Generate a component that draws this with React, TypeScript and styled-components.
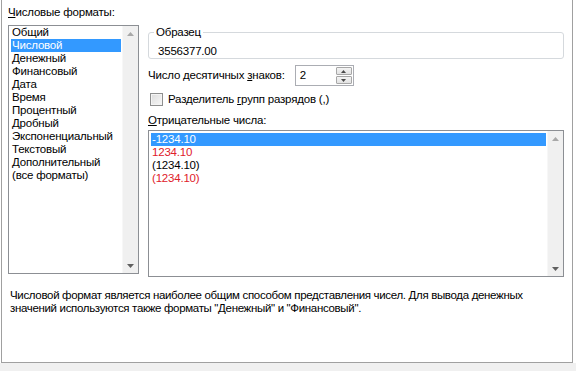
import React from 'react'
import styled, { createGlobalStyle } from 'styled-components'

const GlobalStyle = createGlobalStyle`
  html, body {
    margin: 0;
    padding: 0;
    background: #f0f0f0;
  }
  body {
    font-family: "Liberation Sans", Arial, sans-serif;
    font-size: 11.5px;
    letter-spacing: -0.2px;
    color: #000;
  }
`

const formats = [
  'Общий',
  'Числовой',
  'Денежный',
  'Финансовый',
  'Дата',
  'Время',
  'Процентный',
  'Дробный',
  'Экспоненциальный',
  'Текстовый',
  'Дополнительный',
  '(все форматы)',
]

const negatives = [
  { text: '-1234.10', red: false },
  { text: '1234.10', red: true },
  { text: '(1234.10)', red: false },
  { text: '(1234.10)', red: true },
]

const Page = styled.div`
  width: 576px;
  background: #fff;
`

const Panel = styled.div`
  width: 572px;
  height: 363px;
  margin-left: 1px;
  box-sizing: border-box;
  border-left: 1px solid #a0a0a0;
  border-right: 1px solid #a0a0a0;
  border-bottom: 1px solid #a0a0a0;
  padding: 6px 0 0 6px;
  display: flex;
  flex-direction: column;
`

const TopRow = styled.div`
  display: flex;
  align-items: flex-start;
  gap: 9px;
`

const Column = styled.div<{ $width: number }>`
  width: ${(p) => p.$width}px;
  display: flex;
  flex-direction: column;
`

const Label = styled.div`
  line-height: 13px;
  height: 13px;
  white-space: nowrap;
`

const Key = styled.span`
  text-decoration: underline;
`

const ListBox = styled.div<{ $height: number; $top: number }>`
  margin-top: ${(p) => p.$top}px;
  height: ${(p) => p.$height}px;
  box-sizing: border-box;
  border: 1px solid #8c8f94;
  background: #fff;
  display: flex;
`

const Items = styled.div<{ $padTop: number }>`
  flex: 1;
  padding: ${(p) => p.$padTop}px 1px 0 2px;
`

const Item = styled.div<{ $selected?: boolean; $red?: boolean }>`
  height: 13px;
  line-height: 13px;
  padding-left: 1px;
  white-space: nowrap;
  background: ${(p) => (p.$selected ? '#3399ff' : 'transparent')};
  color: ${(p) => (p.$selected ? '#fff' : p.$red ? '#e0202a' : '#000')};
`

const ScrollBar = styled.div`
  width: 16px;
  background: #f0f0f0;
  border-left: 1px solid #f7f7f7;
  display: flex;
  flex-direction: column;
  justify-content: space-between;
  align-items: center;
  padding: 6px 0 5px;
  box-sizing: border-box;
`

const Arrow = ({ down }: { down?: boolean }) => (
  <svg width="7" height="4" viewBox="0 0 7 4">
    <path d={down ? 'M0 0H7L3.5 4Z' : 'M0 4H7L3.5 0Z'} fill={down ? '#606060' : '#a8a8a8'} />
  </svg>
)

const Sample = styled.fieldset`
  margin: 20px 0 0 0;
  padding: 6px 5px 0 5px;
  border: 1px solid #d5d9dd;
  border-radius: 3px;
  min-width: 0;
`

const Legend = styled.legend`
  padding: 0 2px;
  line-height: 13px;
`

const SampleValue = styled.div`
  line-height: 13px;
  padding-left: 4px;
`

const Row = styled.div<{ $top: number }>`
  margin-top: ${(p) => p.$top}px;
  display: flex;
  align-items: center;
`

const Spinner = styled.div`
  margin-left: 10px;
  width: 59px;
  height: 21px;
  box-sizing: border-box;
  border: 1px solid #abadb3;
  display: flex;
  background: #fff;
`

const SpinValue = styled.div`
  flex: 1;
  padding-left: 4px;
  line-height: 19px;
`

const SpinButtons = styled.div`
  width: 16px;
  display: flex;
  flex-direction: column;
  gap: 1px;
  padding: 1px 1px 1px 0;
`

const SpinButton = styled.div`
  flex: 1;
  border: 1px solid #a7a7a7;
  border-radius: 1px;
  background: linear-gradient(#f4f4f4, #e2e2e2);
  display: flex;
  align-items: center;
  justify-content: center;
`

const SpinArrow = ({ down }: { down?: boolean }) => (
  <svg width="5" height="3" viewBox="0 0 5 3">
    <path d={down ? 'M0 0H5L2.5 3Z' : 'M0 3H5L2.5 0Z'} fill="#4a4a4a" />
  </svg>
)

const CheckBox = styled.div`
  width: 13px;
  height: 13px;
  margin-left: 2px;
  box-sizing: border-box;
  border: 1px solid #8e8f8f;
  background: linear-gradient(135deg, #dcdcdc, #f8f8f8);
  box-shadow: inset 0 0 0 1px #f4f4f4;
`

const CheckLabel = styled.span`
  margin-left: 5px;
  line-height: 13px;
`

const Description = styled.div`
  margin-top: 12px;
  padding-left: 2px;
  line-height: 13px;
  letter-spacing: -0.33px;
  white-space: nowrap;
`

export default function App() {
  return (
    <Page>
      <GlobalStyle />
      <Panel>
        <TopRow>
          <Column $width={131}>
            <Label>
              <Key>Ч</Key>исловые форматы:
            </Label>
            <ListBox $height={249} $top={6}>
              <Items $padTop={0}>
                {formats.map((f) => (
                  <Item key={f} $selected={f === 'Числовой'}>
                    {f}
                  </Item>
                ))}
              </Items>
              <ScrollBar>
                <Arrow />
                <Arrow down />
              </ScrollBar>
            </ListBox>
          </Column>
          <Column $width={416}>
            <Sample>
              <Legend>Образец</Legend>
              <SampleValue>3556377.00</SampleValue>
            </Sample>
            <Row $top={6}>
              <Label>
                Число десятичных <Key>з</Key>наков:
              </Label>
              <Spinner>
                <SpinValue>2</SpinValue>
                <SpinButtons>
                  <SpinButton>
                    <SpinArrow />
                  </SpinButton>
                  <SpinButton>
                    <SpinArrow down />
                  </SpinButton>
                </SpinButtons>
              </Spinner>
            </Row>
            <Row $top={7}>
              <CheckBox />
              <CheckLabel>
                Разделитель <Key>г</Key>рупп разрядов (,)
              </CheckLabel>
            </Row>
            <Row $top={8}>
              <Label>
                <Key>О</Key>трицательные числа:
              </Label>
            </Row>
            <ListBox $height={147} $top={3}>
              <Items $padTop={2}>
                {negatives.map((n, i) => (
                  <Item key={i} $selected={i === 0} $red={n.red}>
                    {n.text}
                  </Item>
                ))}
              </Items>
              <ScrollBar>
                <Arrow />
                <Arrow down />
              </ScrollBar>
            </ListBox>
          </Column>
        </TopRow>
        <Description>
          Числовой формат является наиболее общим способом представления чисел. Для вывода денежных
          <br />
          значений используются также форматы "Денежный" и "Финансовый".
        </Description>
      </Panel>
    </Page>
  )
}
